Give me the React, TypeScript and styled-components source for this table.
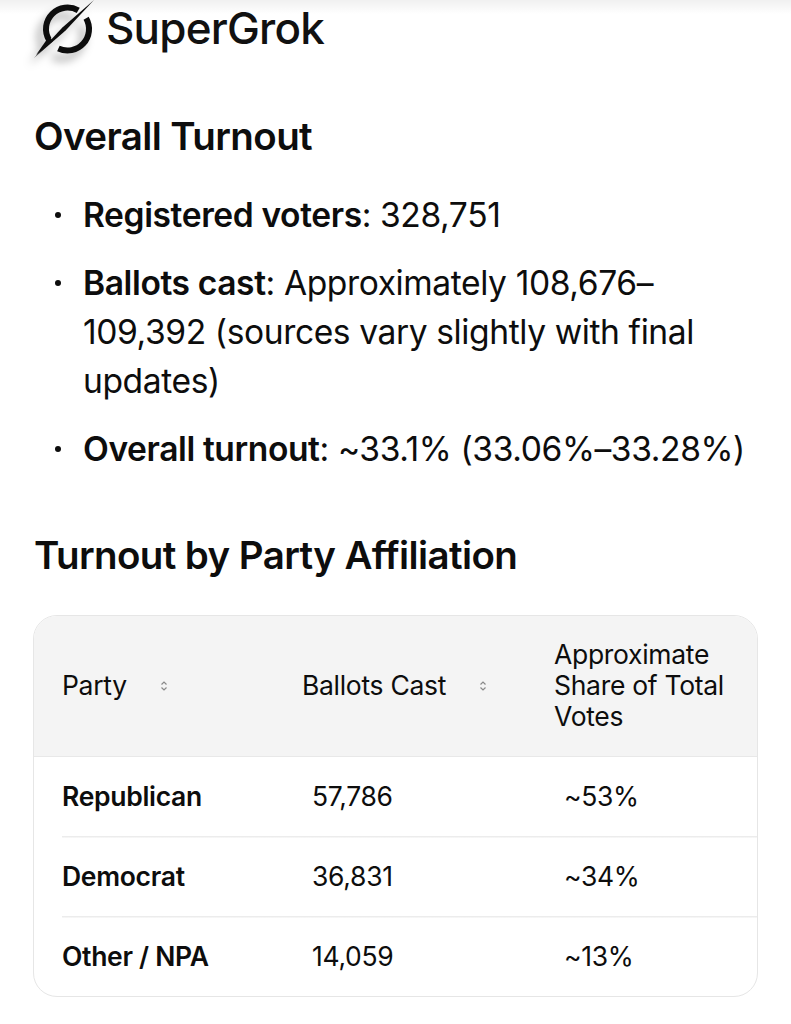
import React from 'react';
import styled, { createGlobalStyle } from 'styled-components';

const GlobalStyle = createGlobalStyle`
  html, body {
    margin: 0;
    padding: 0;
    background: #ffffff;
  }
  body {
    font-family: Inter, 'Noto Sans', 'Liberation Sans', sans-serif;
    color: #0d0d0d;
    -webkit-font-smoothing: antialiased;
  }
`;

const Page = styled.div`
  width: 791px;
  min-height: 1024px;
  box-sizing: border-box;
  padding: 0 34px;
  background: linear-gradient(180deg, rgba(0, 0, 0, 0.06) 0px, rgba(0, 0, 0, 0) 14px);
`;

const Brand = styled.div`
  display: flex;
  align-items: center;
  gap: 10px;
  height: 58px;
  margin-left: -2px;
`;

const Logo = styled.svg`
  width: 64px;
  height: 58px;
  flex-shrink: 0;
  filter: drop-shadow(-6px 8px 4px rgba(0, 0, 0, 0.3));
`;

const BrandName = styled.span`
  font-size: 44px;
  font-weight: 500;
  letter-spacing: -0.8px;
  color: #111;
  margin-bottom: 2px;
`;

const Heading = styled.h2<{ $top: number }>`
  margin: ${(p) => p.$top}px 0 0 0;
  font-size: 38.5px;
  line-height: 44px;
  font-weight: 600;
  letter-spacing: -0.6px;
  color: #0d0d0d;
`;

const List = styled.ul`
  list-style: none;
  margin: 32px 0 0 0;
  padding: 0;
  display: flex;
  flex-direction: column;
  gap: 19px;
`;

const Item = styled.li`
  position: relative;
  padding-left: 49px;
  font-size: 33.6px;
  line-height: 49px;
  letter-spacing: -0.4px;
  color: #0d0d0d;

  &::before {
    content: '';
    position: absolute;
    left: 21px;
    top: 22px;
    width: 6px;
    height: 6px;
    border-radius: 50%;
    background: #0d0d0d;
  }
`;

const Strong = styled.strong`
  font-weight: 600;
`;

const Card = styled.div`
  margin-top: 38px;
  width: 725px;
  box-sizing: border-box;
  border: 1.5px solid #e6e6e6;
  border-radius: 24px;
  overflow: hidden;
  margin-left: -1px;
`;

const Table = styled.table`
  width: 100%;
  border-collapse: collapse;
  table-layout: fixed;
  font-size: 26.5px;
  letter-spacing: -0.3px;
`;

const HeadRow = styled.tr`
  background: #f4f4f4;
  height: 140px;
  border-bottom: 1.5px solid #e8e8e8;
`;

const Th = styled.th<{ $w: number; $pl: number }>`
  width: ${(p) => p.$w}px;
  padding: 0 0 0 ${(p) => p.$pl}px;
  text-align: left;
  font-weight: 400;
  line-height: 31px;
  vertical-align: middle;
`;

const HeadInner = styled.div`
  display: inline-flex;
  align-items: center;
  gap: 32px;
`;

const SortIcon = styled.svg`
  width: 10px;
  height: 12px;
  flex-shrink: 0;
`;

const Row = styled.tr`
  height: 80px;
`;

const Td = styled.td<{ $bold?: boolean; $pl: number; $first?: boolean }>`
  padding: 0 0 0 ${(p) => p.$pl}px;
  font-weight: ${(p) => (p.$bold ? 600 : 400)};
  vertical-align: middle;
  line-height: 30px;
  background-image: ${(p) =>
    p.$first ? 'none' : 'linear-gradient(#ececec, #ececec)'};
  background-repeat: no-repeat;
  background-size: 100% 1.5px;
  background-position: ${(p) => (p.$bold ? '28px 0' : '0 0')};
`;

const Sort = () => (
  <SortIcon viewBox="0 0 10 12">
    <path d="M2.5 4.5 L5 2 L7.5 4.5" fill="none" stroke="#8a8a8a" strokeWidth="1.2" />
    <path d="M2.5 7.5 L5 10 L7.5 7.5" fill="none" stroke="#8a8a8a" strokeWidth="1.2" />
  </SortIcon>
);

const GrokLogo = () => (
  <Logo viewBox="0 0 64 58">
    <path
      d="M46.25 10.38 A21.5 21.5 0 0 0 16.88 39.75"
      fill="none"
      stroke="#0d0d0d"
      strokeWidth="6"
    />
    <path
      d="M54.12 18.25 A21.5 21.5 0 0 1 26.41 48.49"
      fill="none"
      stroke="#0d0d0d"
      strokeWidth="6"
    />
    <polygon points="62,0 33.6,30.6 2,58 30.4,27.4" fill="#0d0d0d" />
    <polygon points="16.9,36.5 21,41 4,55" fill="#0d0d0d" />
  </Logo>
);

const rows = [
  { party: 'Republican', ballots: '57,786', share: '~53%' },
  { party: 'Democrat', ballots: '36,831', share: '~34%' },
  { party: 'Other / NPA', ballots: '14,059', share: '~13%' },
];

export default function App() {
  return (
    <>
      <GlobalStyle />
      <Page>
        <Brand>
          <GrokLogo />
          <BrandName>SuperGrok</BrandName>
        </Brand>

        <Heading $top={56}>Overall Turnout</Heading>
        <List>
          <Item>
            <Strong>Registered voters</Strong>: 328,751
          </Item>
          <Item>
            <Strong>Ballots cast</Strong>: Approximately 108,676–109,392 (sources vary slightly with final
            updates)
          </Item>
          <Item>
            <Strong>Overall turnout</Strong>: ~33.1% (33.06%–33.28%)
          </Item>
        </List>

        <Heading $top={60}>Turnout by Party Affiliation</Heading>

        <Card>
          <Table>
            <thead>
              <HeadRow>
                <Th $w={240} $pl={28}>
                  <HeadInner>
                    <span>Party</span>
                    <Sort />
                  </HeadInner>
                </Th>
                <Th $w={252} $pl={0}>
                  <HeadInner>
                    <span>Ballots Cast</span>
                    <Sort />
                  </HeadInner>
                </Th>
                <Th $w={204} $pl={0}>
                  Approximate
                  <br />
                  Share of Total
                  <br />
                  Votes
                </Th>
              </HeadRow>
            </thead>
            <tbody>
              {rows.map((r, i) => (
                <Row key={r.party}>
                  <Td $bold $first={i === 0} $pl={28}>
                    {r.party}
                  </Td>
                  <Td $first={i === 0} $pl={10}>
                    {r.ballots}
                  </Td>
                  <Td $first={i === 0} $pl={10}>
                    {r.share}
                  </Td>
                </Row>
              ))}
            </tbody>
          </Table>
        </Card>
      </Page>
    </>
  );
}
